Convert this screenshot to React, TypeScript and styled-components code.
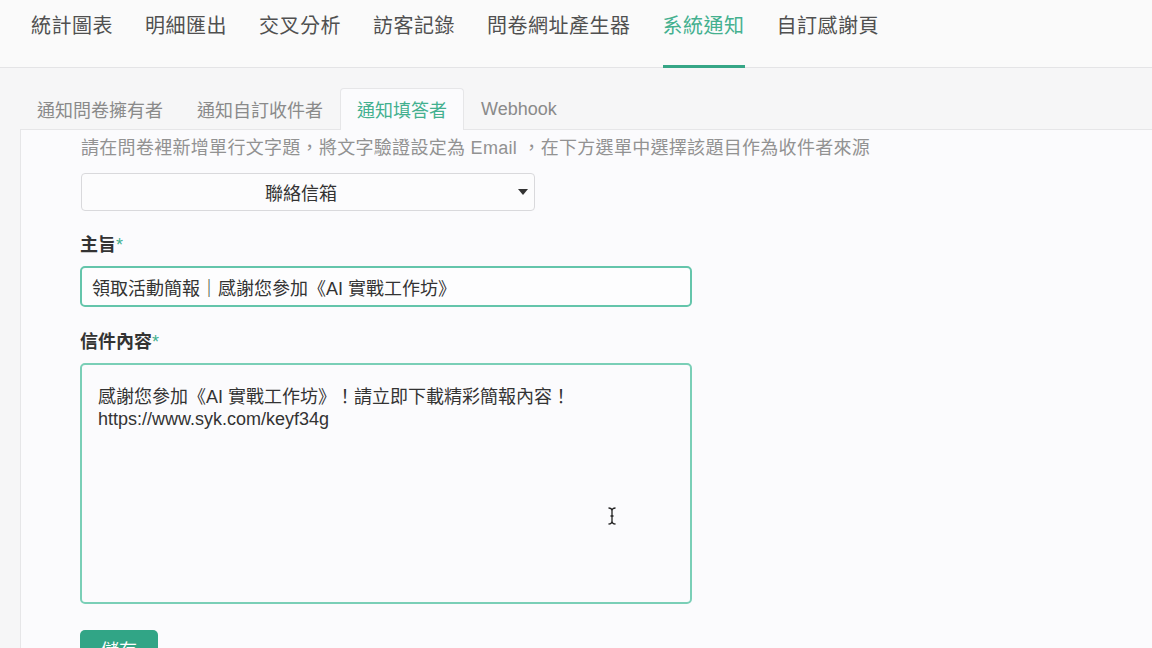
import React from "react";
import styled, { createGlobalStyle } from "styled-components";

const GlobalStyle = createGlobalStyle`
  html, body {
    margin: 0;
    padding: 0;
    background: #f6f6f7;
    font-family: "Liberation Sans", "Noto Sans CJK TC", sans-serif;
    color: #333;
  }
  * { box-sizing: border-box; }
`;

const Page = styled.div`
  width: 1152px;
  height: 648px;
  overflow: hidden;
`;

const TopNav = styled.nav`
  display: flex;
  height: 68px;
  padding-left: 15px;
  background: #fafafa;
  border-bottom: 1px solid #e4e4e6;
`;

const NavItem = styled.div<{ $active?: boolean }>`
  position: relative;
  padding: 12px 16px 0;
  font-size: 20px;
  letter-spacing: 0.5px;
  line-height: 28px;
  color: ${(p) => (p.$active ? "#44b08f" : "#505050")};

  &::after {
    content: "";
    display: ${(p) => (p.$active ? "block" : "none")};
    position: absolute;
    left: 16px;
    right: 16px;
    bottom: -1px;
    height: 3px;
    background: #36a686;
  }
`;

const Body = styled.div`
  padding: 20px 0 0 20px;
`;

const Tabs = styled.div`
  display: flex;
  height: 42px;
  position: relative;
  z-index: 1;
  margin-bottom: -1px;
`;

const Tab = styled.div<{ $active?: boolean }>`
  display: flex;
  align-items: center;
  padding: 0 16px 1px;
  font-size: 18px;
  color: ${(p) => (p.$active ? "#43b08f" : "#8a8a8a")};
  border: 1px solid ${(p) => (p.$active ? "#e6e6e8" : "transparent")};
  border-bottom: none;
  border-radius: 4px 4px 0 0;
  background: ${(p) => (p.$active ? "#fbfbfd" : "transparent")};
`;

const Card = styled.section`
  background: #fbfbfd;
  border-top: 1px solid #e6e6e8;
  border-left: 1px solid #e6e6e8;
  padding: 6px 0 0 60px;
  height: 560px;
`;

const Hint = styled.p`
  margin: 0;
  font-size: 18px;
  letter-spacing: 0.3px;
  line-height: 24px;
  color: #929292;
`;

const SelectBox = styled.div`
  position: relative;
  display: flex;
  align-items: center;
  justify-content: center;
  width: 454px;
  height: 38px;
  margin-top: 13px;
  padding-right: 14px;
  border: 1px solid #d9d9dc;
  border-radius: 4px;
  background: #fcfcfd;
  font-size: 18px;
  color: #333;
`;

const Caret = styled.span`
  position: absolute;
  right: 6px;
  top: 15px;
  width: 0;
  height: 0;
  border-left: 5px solid transparent;
  border-right: 5px solid transparent;
  border-top: 6px solid #333;
`;

const Field = styled.div<{ $gap: number }>`
  display: flex;
  flex-direction: column;
  width: 612px;
  margin-left: -1px;
  margin-top: ${(p) => p.$gap}px;
`;

const Label = styled.label`
  font-size: 18px;
  font-weight: 700;
  line-height: 24px;
  color: #333;
  margin-bottom: 9px;
`;

const Required = styled.span`
  color: #43b08f;
  font-weight: 400;
`;

const TextInput = styled.div`
  height: 41px;
  display: flex;
  align-items: center;
  padding: 0 10px;
  border: 2px solid #64c5ab;
  border-radius: 5px;
  background: #fdfdfe;
  font-size: 18px;
  color: #333;
`;

const TextArea = styled.div`
  position: relative;
  height: 241px;
  padding: 21px 16px;
  border: 2px solid #7acfb7;
  border-radius: 5px;
  background: #fbfbfd;
  font-size: 18px;
  line-height: 22px;
  color: #333;
  white-space: pre-line;
`;

const Pointer = styled.svg`
  position: absolute;
  left: 525px;
  top: 141px;
`;

const SaveButton = styled.button`
  margin-top: 26px;
  margin-left: -1px;
  width: 78px;
  height: 40px;
  border: none;
  border-radius: 5px;
  background: #31a586;
  color: #fff;
  font-family: inherit;
  font-size: 18px;
  line-height: 24px;
  padding: 9px 0 0;
  display: flex;
  justify-content: center;
  align-items: flex-start;
`;

const navItems = ["統計圖表", "明細匯出", "交叉分析", "訪客記錄", "問卷網址產生器", "系統通知", "自訂感謝頁"];
const tabs = ["通知問卷擁有者", "通知自訂收件者", "通知填答者", "Webhook"];

export default function App() {
  return (
    <Page>
      <GlobalStyle />
      <TopNav>
        {navItems.map((n) => (
          <NavItem key={n} $active={n === "系統通知"}>
            {n}
          </NavItem>
        ))}
      </TopNav>
      <Body>
        <Tabs>
          {tabs.map((t) => (
            <Tab key={t} $active={t === "通知填答者"}>
              {t}
            </Tab>
          ))}
        </Tabs>
        <Card>
          <Hint>請在問卷裡新增單行文字題，將文字驗證設定為 Email ，在下方選單中選擇該題目作為收件者來源</Hint>
          <SelectBox>
            聯絡信箱
            <Caret />
          </SelectBox>
          <Field $gap={22}>
            <Label>
              主旨<Required>*</Required>
            </Label>
            <TextInput>領取活動簡報｜感謝您參加《AI 實戰工作坊》</TextInput>
          </Field>
          <Field $gap={23}>
            <Label>
              信件內容<Required>*</Required>
            </Label>
            <TextArea>
              {"感謝您參加《AI 實戰工作坊》！請立即下載精彩簡報內容！\nhttps://www.syk.com/keyf34g"}
              <Pointer width="10" height="20" viewBox="0 0 10 20">
                <path
                  d="M1.5 2 Q5 2 5 5 Q5 2 8.5 2 M5 5 V15 M1.5 18 Q5 18 5 15 Q5 18 8.5 18 M3.5 10 H6.5"
                  fill="none"
                  stroke="#222"
                  strokeWidth="1.3"
                />
              </Pointer>
            </TextArea>
          </Field>
          <SaveButton>儲存</SaveButton>
        </Card>
      </Body>
    </Page>
  );
}
